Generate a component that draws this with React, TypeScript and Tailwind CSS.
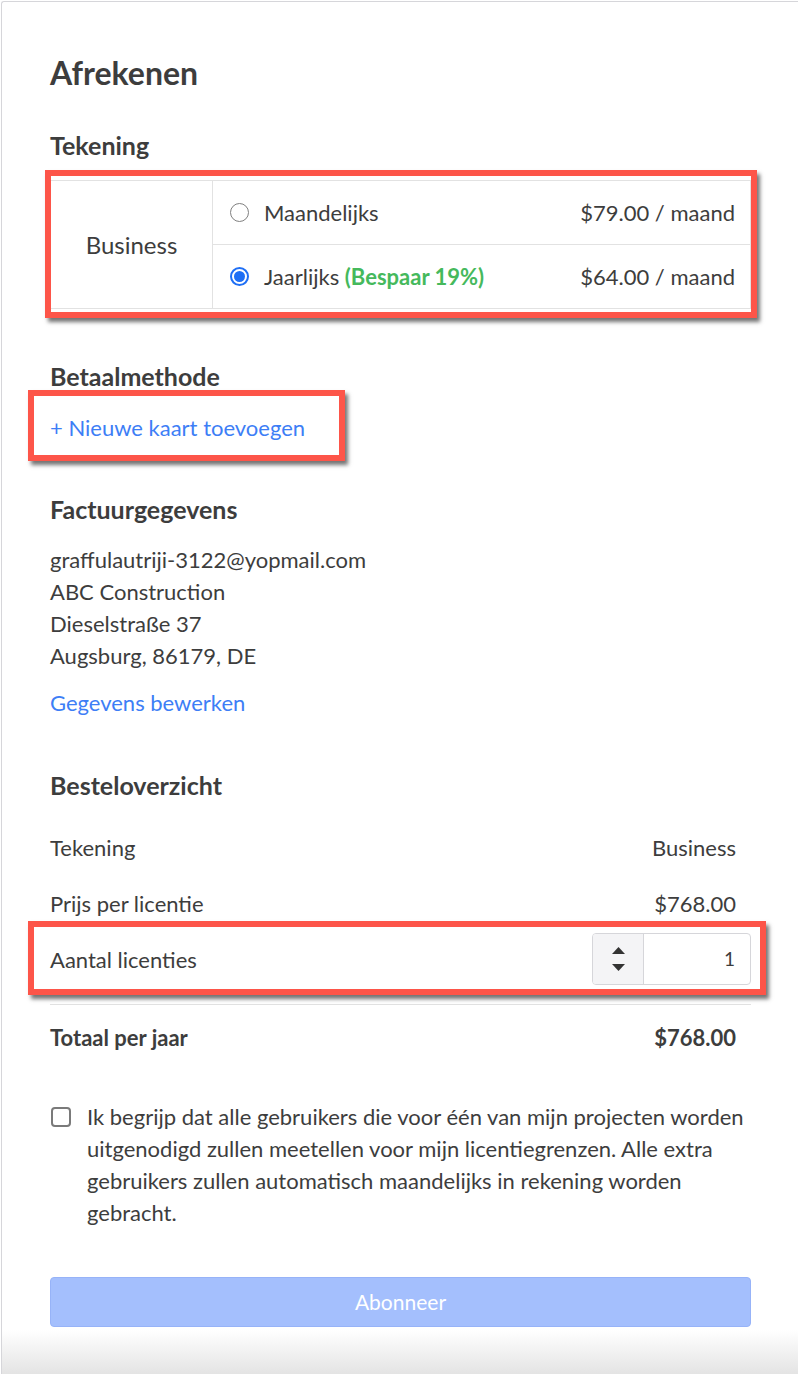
import React from "react";

const red = "pointer-events-none absolute border-[6px] border-[#fd5549] shadow-[3px_4px_4px_rgba(0,0,0,0.55)]";

function Radio({ checked }: { checked: boolean }) {
    return checked ? (
        <span className="flex h-[19px] w-[19px] shrink-0 items-center justify-center rounded-full border-2 border-[#1f6ff5]">
            <span className="h-[11px] w-[11px] rounded-full bg-[#1f6ff5]" />
        </span>
    ) : (
        <span className="h-[19px] w-[19px] shrink-0 rounded-full border border-[#808080]" />
    );
}

export default function App() {
    return (
        <div className="w-[798px] overflow-hidden pt-px pl-px" style={{ fontFamily: "Lato, 'Open Sans', sans-serif" }}>
            <div className="min-h-[1373px] w-[830px] rounded-tl-[3px] border-l border-t border-[#d6d6da] bg-[linear-gradient(to_bottom,#ffffff_1328px,#e3e3e3_1373px)] pl-[48px] pt-[52px] text-[#3d3d3d]">
                <div className="w-[701px]">
                    <h1 className="text-[32px] font-bold leading-[38px]">Afrekenen</h1>

                    {/* Tekening */}
                    <h2 className="mt-[38px] text-[25px] font-bold leading-[30px]">Tekening</h2>
                    <div className="relative mt-[20px]">
                        <div className="flex border border-[#e2e2e2] text-[22px]">
                            <div className="flex w-[162px] items-center justify-center border-r border-[#e2e2e2] text-[24px]">Business</div>
                            <div className="flex-1">
                                <div className="flex h-[64px] items-center border-b border-[#e2e2e2] pl-[17px] pr-[15px]">
                                    <Radio checked={false} />
                                    <span className="ml-[15px]">Maandelijks</span>
                                    <span className="ml-auto">$79.00 / maand</span>
                                </div>
                                <div className="flex h-[63px] items-center pl-[17px] pr-[15px]">
                                    <Radio checked={true} />
                                    <span className="ml-[15px]">
                                        Jaarlijks <span className="font-bold text-[#45b95c]">(Bespaar 19%)</span>
                                    </span>
                                    <span className="ml-auto">$64.00 / maand</span>
                                </div>
                            </div>
                        </div>
                        <div className={`${red} -left-[5px] -right-[6px] -top-[10px] -bottom-[9px]`} />
                    </div>

                    {/* Betaalmethode */}
                    <h2 className="mt-[52px] text-[25px] font-bold leading-[30px]">Betaalmethode</h2>
                    <div className="relative mt-[21px]">
                        <a className="text-[22px] leading-[32px] text-[#3d7ef6]">+ Nieuwe kaart toevoegen</a>
                        <div className={`${red} -left-[22px] -top-[22px] h-[71px] w-[317px]`} />
                    </div>

                    {/* Factuurgegevens */}
                    <h2 className="mt-[50px] text-[25px] font-bold leading-[30px]">Factuurgegevens</h2>
                    <div className="mt-[20px] text-[22px] leading-[32px]">
                        <p>graffulautriji-3122@yopmail.com</p>
                        <p>ABC Construction</p>
                        <p>Dieselstraße 37</p>
                        <p>Augsburg, 86179, DE</p>
                    </div>
                    <a className="mt-[15px] block text-[22px] leading-[32px] text-[#3d7ef6]">Gegevens bewerken</a>

                    {/* Besteloverzicht */}
                    <h2 className="mt-[51px] text-[25px] font-bold leading-[30px]">Besteloverzicht</h2>
                    <div className="mt-[19px] text-[22px]">
                        <div className="flex h-[56px] items-center justify-between pr-[15px]">
                            <span>Tekening</span>
                            <span>Business</span>
                        </div>
                        <div className="flex h-[56px] items-center justify-between pr-[15px]">
                            <span>Prijs per licentie</span>
                            <span>$768.00</span>
                        </div>
                        <div className="relative flex h-[56px] items-center justify-between">
                            <span>Aantal licenties</span>
                            <div className="flex h-[52px] w-[159px] overflow-hidden rounded-[4px] border border-[#d6d6da]">
                                <div className="flex w-[51px] flex-col items-center justify-center gap-[10px] border-r border-[#d6d6da] bg-[#f4f4f6]">
                                    <svg width="13" height="7" viewBox="0 0 13 7"><path d="M6.5 0 L13 7 L0 7 Z" fill="#333" /></svg>
                                    <svg width="13" height="7" viewBox="0 0 13 7"><path d="M0 0 L13 0 L6.5 7 Z" fill="#333" /></svg>
                                </div>
                                <div className="flex flex-1 items-center justify-end pr-[15px] text-[19px]">1</div>
                            </div>
                            <div className={`${red} -left-[22px] -right-[15px] -top-[10px] -bottom-[8px]`} />
                        </div>
                        <div className="mt-[17px] border-t border-[#e2e2e2] pr-[15px] pt-[17px]">
                            <div className="flex items-center justify-between font-bold leading-[32px]">
                                <span>Totaal per jaar</span>
                                <span>$768.00</span>
                            </div>
                        </div>
                    </div>

                    {/* Akkoord */}
                    <label className="mt-[47px] flex text-[22px] leading-[32px]">
                        <span className="ml-px mt-[6px] h-[20px] w-[20px] shrink-0 rounded-[4px] border-2 border-[#7a7a7a]" />
                        <span className="ml-[16px]">
                            Ik begrijp dat alle gebruikers die voor één van mijn projecten worden uitgenodigd zullen meetellen voor mijn licentiegrenzen. Alle extra gebruikers zullen automatisch maandelijks in rekening worden gebracht.
                        </span>
                    </label>

                    <button className="mt-[48px] flex h-[50px] w-full items-center justify-center rounded-[4px] border border-[#97b3f8] bg-[#a4bffd] text-[21px] text-white">
                        Abonneer
                    </button>
                </div>
            </div>
        </div>
    );
}
